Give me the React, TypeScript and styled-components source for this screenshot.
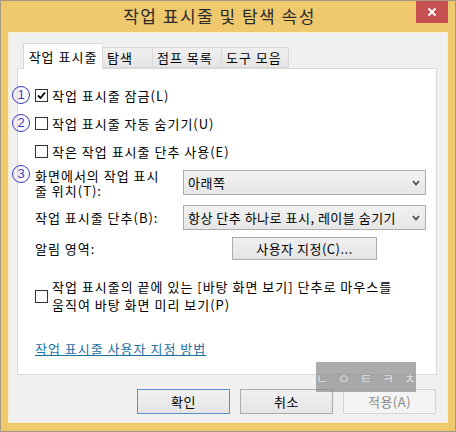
import React from "react";
import styled, { createGlobalStyle } from "styled-components";

const GlobalStyle = createGlobalStyle`
  html, body { margin: 0; padding: 0; background: #fff; }
  body {
    font-family: "Noto Sans CJK KR", "Noto Sans", sans-serif;
    font-size: 13px;
    letter-spacing: 1px;
    color: #000;
  }
`;

const Window = styled.div`
  position: relative;
  box-sizing: border-box;
  width: 456px;
  height: 432px;
  display: flex;
  flex-direction: column;
  background: #f0c86e;
  border: 1px solid #a39a84;
`;

const TitleBar = styled.div`
  height: 31px;
  display: flex;
  align-items: flex-start;
`;

const Title = styled.div`
  flex: 1;
  padding-left: 22px;
  height: 29px;
  line-height: 29px;
  text-align: center;
  font-size: 17px;
  letter-spacing: 1.5px;
  color: #2b2b2b;
`;

const CloseButton = styled.div`
  width: 32px;
  height: 22px;
  margin-right: 7px;
  background: #c75050;
  display: flex;
  align-items: center;
  justify-content: center;
`;

const Client = styled.div`
  flex: 1;
  margin: 0 7px 8px 7px;
  border: 1px solid #f9ecca;
  background: #f0f0f0;
  display: flex;
  flex-direction: column;
`;

const TabRow = styled.div`
  margin-top: 10px;
  padding-left: 14px;
  height: 25px;
  display: flex;
  align-items: flex-end;
  position: relative;
  z-index: 1;
`;

const Tab = styled.div<{ $active?: boolean; $first?: boolean; $w: number }>`
  box-sizing: border-box;
  height: ${(p) => (p.$active ? "26px" : "21px")};
  margin-bottom: ${(p) => (p.$active ? "-1px" : "0")};
  width: ${(p) => p.$w}px;
  border: 1px solid #d9d9d9;
  border-bottom: ${(p) => (p.$active ? "none" : "1px solid #d9d9d9")};
  border-left: ${(p) => (p.$first ? "1px solid #d9d9d9" : "none")};
  background: ${(p) => (p.$active ? "#fff" : "linear-gradient(#f0f0f0, #e5e5e5)")};
  display: flex;
  align-items: center;
  justify-content: ${(p) => (p.$active ? "center" : "flex-start")};
  padding-left: ${(p) => (p.$active ? "0" : "4px")};
  white-space: nowrap;
`;

const Panel = styled.div`
  flex: 1;
  margin: 0 10px 0 8px;
  border: 1px solid #d9d9d9;
  background: #fff;
  padding: 12px 0 0 17px;
  display: flex;
  flex-direction: column;
`;

const CheckRow = styled.div`
  position: relative;
  height: 28px;
  display: flex;
  align-items: center;
  gap: 4px;
  white-space: nowrap;
`;

const Box = styled.span`
  box-sizing: border-box;
  width: 13px;
  height: 13px;
  border: 1px solid #333;
  background: #fff;
  display: flex;
  align-items: center;
  justify-content: center;
  flex: none;
`;

const Marker = styled.span<{ $top?: number }>`
  position: absolute;
  left: -23px;
  top: ${(p) => (p.$top !== undefined ? `${p.$top}px` : "50%")};
  transform: ${(p) => (p.$top !== undefined ? "none" : "translateY(-50%)")};
  box-sizing: border-box;
  width: 18px;
  height: 18px;
  border: 1.5px solid #3838c4;
  border-radius: 50%;
  color: #3838c4;
  font-family: "Liberation Sans", sans-serif;
  font-size: 13px;
  letter-spacing: 0;
  line-height: 15px;
  text-align: center;
`;

const FormGrid = styled.div`
  margin-top: 5px;
  display: grid;
  grid-template-columns: 148px 243px;
  row-gap: 7px;
`;

const Label = styled.div<{ $top?: boolean }>`
  position: relative;
  align-self: ${(p) => (p.$top ? "start" : "center")};
  margin-top: ${(p) => (p.$top ? "-2px" : "0")};
  line-height: 15px;
  white-space: nowrap;
`;

const Select = styled.div`
  box-sizing: border-box;
  height: 25px;
  border: 1px solid #acacac;
  background: linear-gradient(#f2f2f2, #e6e6e6);
  display: flex;
  align-items: center;
  justify-content: space-between;
  padding: 0 5px 0 4px;
  letter-spacing: 0.5px;
  white-space: nowrap;
`;

const Button = styled.div<{ $variant?: "default" | "disabled"; $w: number; $h?: number }>`
  box-sizing: border-box;
  height: ${(p) => (p.$h ? p.$h : 25)}px;
  width: ${(p) => p.$w}px;
  border: 1px solid
    ${(p) => (p.$variant === "default" ? "#5b8fc9" : p.$variant === "disabled" ? "#d5d5d5" : "#acacac")};
  background: ${(p) => (p.$variant === "disabled" ? "#f4f4f4" : "linear-gradient(#f0f0f0, #e5e5e5)")};
  color: ${(p) => (p.$variant === "disabled" ? "#8a8a8a" : "#000")};
  display: flex;
  align-items: center;
  justify-content: center;
  justify-self: center;
  letter-spacing: 0.5px;
  white-space: nowrap;
`;

const LongRow = styled.div`
  margin-top: 18px;
  display: flex;
  align-items: center;
  gap: 4px;
  line-height: 18px;
  white-space: nowrap;
`;

const Link = styled.a`
  margin-top: 26px;
  align-self: flex-start;
  color: #1d6fa5;
  text-decoration: underline;
  line-height: 17px;
`;

const ButtonRow = styled.div`
  display: flex;
  justify-content: flex-end;
  gap: 10px;
  padding: 14px 11px 8px 0;
`;

const Watermark = styled.div`
  position: absolute;
  left: 315px;
  top: 361px;
  width: 100px;
  height: 30px;
  background: rgba(140, 140, 140, 0.72);
  color: rgba(255, 255, 255, 0.88);
  display: flex;
  align-items: center;
  justify-content: center;
  font-size: 13px;
  font-weight: 300;
  letter-spacing: 10px;
  padding-left: 10px;
  white-space: nowrap;
  box-sizing: border-box;
`;

function Check({ checked }: { checked?: boolean }) {
  return (
    <Box>
      {checked && (
        <svg width="9" height="9" viewBox="0 0 9 9">
          <polyline points="1,4.5 3.5,7 8,1.5" fill="none" stroke="#000" strokeWidth="1.8" />
        </svg>
      )}
    </Box>
  );
}

function Chevron() {
  return (
    <svg width="8" height="6" viewBox="0 0 8 6">
      <polyline points="1,1 4,4.5 7,1" fill="none" stroke="#444" strokeWidth="1.6" />
    </svg>
  );
}

export default function App() {
  return (
    <>
      <GlobalStyle />
      <Window>
        <TitleBar>
          <Title>작업 표시줄 및 탐색 속성</Title>
          <CloseButton>
            <svg width="10" height="10" viewBox="0 0 10 10">
              <path d="M1.5 1.5 L8.5 8.5 M8.5 1.5 L1.5 8.5" stroke="#fff" strokeWidth="2" />
            </svg>
          </CloseButton>
        </TitleBar>
        <Client>
          <TabRow>
            <Tab $active $first $w={80}>작업 표시줄</Tab>
            <Tab $w={50}>탐색</Tab>
            <Tab $w={69}>점프 목록</Tab>
            <Tab $w={67}>도구 모음</Tab>
          </TabRow>
          <Panel>
            <CheckRow>
              <Marker>1</Marker>
              <Check checked />
              <span>작업 표시줄 잠금(L)</span>
            </CheckRow>
            <CheckRow>
              <Marker>2</Marker>
              <Check />
              <span>작업 표시줄 자동 숨기기(U)</span>
            </CheckRow>
            <CheckRow>
              <Check />
              <span>작은 작업 표시줄 단추 사용(E)</span>
            </CheckRow>
            <FormGrid>
              <Label $top>
                <Marker $top={-3}>3</Marker>
                화면에서의 작업 표시
                <br />줄 위치(T):
              </Label>
              <Select>
                <span>아래쪽</span>
                <Chevron />
              </Select>
              <Label>작업 표시줄 단추(B):</Label>
              <Select>
                <span>항상 단추 하나로 표시, 레이블 숨기기</span>
                <Chevron />
              </Select>
              <Label>알림 영역:</Label>
              <Button $w={145} $h={23}>사용자 지정(C)...</Button>
            </FormGrid>
            <LongRow>
              <Check />
              <span>
                작업 표시줄의 끝에 있는 [바탕 화면 보기] 단추로 마우스를
                <br />
                움직여 바탕 화면 미리 보기(P)
              </span>
            </LongRow>
            <Link href="#">작업 표시줄 사용자 지정 방법</Link>
          </Panel>
          <ButtonRow>
            <Button $variant="default" $w={93}>확인</Button>
            <Button $w={93}>취소</Button>
            <Button $variant="disabled" $w={93}>적용(A)</Button>
          </ButtonRow>
        </Client>
        <Watermark>ㄴㅇㅌㅋㅊ</Watermark>
      </Window>
    </>
  );
}
